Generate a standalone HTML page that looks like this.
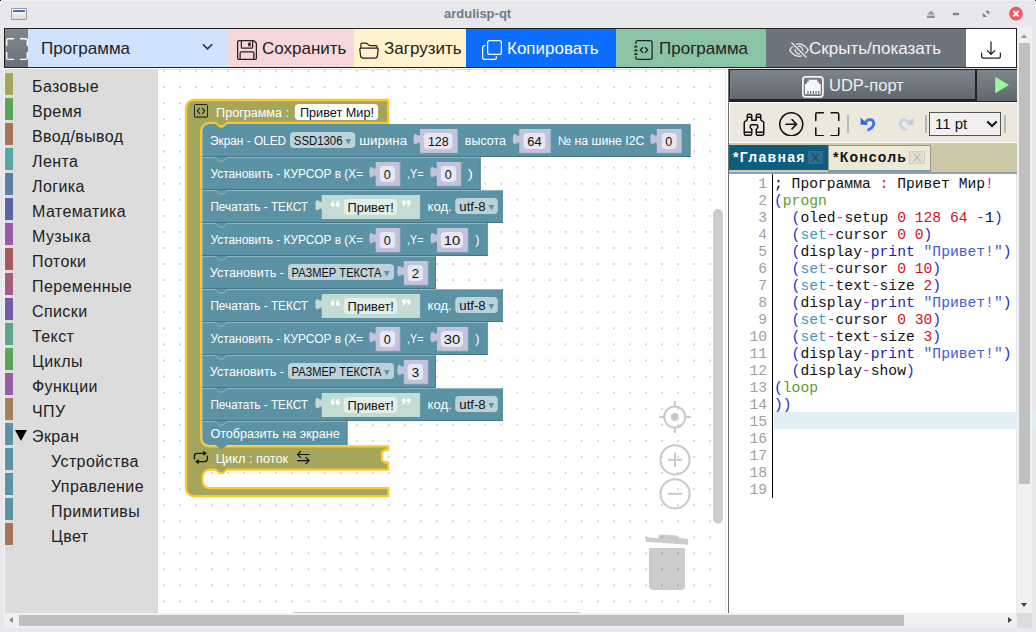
<!DOCTYPE html>
<html><head><meta charset="utf-8">
<style>
*{margin:0;padding:0;box-sizing:border-box}
html,body{width:1036px;height:632px;overflow:hidden;background:#e8e8ec;font-family:"Liberation Sans",sans-serif;position:relative}
.a{position:absolute}
#title{left:0;top:0;width:1036px;height:28px;background:#e8e8ec}
#title .t{left:444px;top:6px;font-size:13px;font-weight:bold;color:#6f7888}
#wicon{left:11px;top:8px;width:16px;height:12px;border:1px solid #9a9a9a;border-radius:1px;background:linear-gradient(#fff,#dcdcd4)}
#wicon:before{content:"";position:absolute;left:1px;right:1px;top:1px;height:2px;background:#4a6fb0}
#tb{left:4px;top:28px;width:1013px;height:40px;border:1px solid #222;border-width:1px 1px 1px 1px;background:#fff}
.btn{top:0;height:38px;font-size:17px;color:#222}
.btn span{position:absolute;top:10px;white-space:nowrap}
#sb{left:4px;top:69px;width:154px;height:544px;background:#dcdcdc;border-left:1px solid #f4f4f4}
.cat{position:absolute;left:28px;font-size:16px;color:#222;white-space:nowrap;letter-spacing:0.4px}
.stripe{position:absolute;left:0px;width:8px;height:22px}
#ws{left:158px;top:69px;width:570px;height:544px;background-color:#fff}
#rp{left:728px;top:69px;width:288px;height:545px;background:#fff}
.ln{position:absolute;left:0;width:39px;text-align:right;font-family:"Liberation Mono",monospace;font-size:14.67px;line-height:17px;color:#a0a0a0}
.cl{position:absolute;left:46px;font-family:"Liberation Mono",monospace;font-size:14.67px;line-height:17px;white-space:pre}
#vs{left:1017px;top:27px;width:15px;height:586px;background:#f0f0f0}
#hs{left:4px;top:613px;width:1028px;height:15px;background:#f0f0f0}
</style></head><body>
<div id="title" class="a"><div id="wicon" class="a"></div>
<svg class="a" style="left:920px;top:0" width="116" height="28" viewBox="920 0 116 28">
<path d="M931,10.7 L935,14.6 L927,14.6 Z" fill="#8a93a3"/><rect x="927" y="15.6" width="8" height="2.4" fill="#8a93a3"/>
<rect x="952.8" y="12.8" width="6.1" height="2.4" fill="#7a8290"/>
<path d="M985,10.8 L989.2,10.8 L989.2,15 Z M982.8,12.8 L982.8,17.1 L987,17.1 Z" fill="#7d8595"/>
<circle cx="1016" cy="13.7" r="6.9" fill="#ef5b62"/>
<path d="M1013.3,11 L1018.7,16.4 M1018.7,11 L1013.3,16.4" stroke="#fff" stroke-width="1.8"/>
</svg><div class="t a">ardulisp-qt</div></div>
<div id="tb" class="a">
  <div class="btn a" style="left:0;width:23px;background:linear-gradient(#80878f,#6a7179);overflow:hidden">
    <svg class="a" style="left:1px;top:9px" width="22" height="22" viewBox="0 0 16 16" fill="#fff"><path d="M1.5 1a.5.5 0 0 0-.5.5v4a.5.5 0 0 1-1 0v-4A1.5 1.5 0 0 1 1.5 0h4a.5.5 0 0 1 0 1zM10 .5a.5.5 0 0 1 .5-.5h4A1.5 1.5 0 0 1 16 1.5v4a.5.5 0 0 1-1 0v-4a.5.5 0 0 0-.5-.5h-4a.5.5 0 0 1-.5-.5M.5 10a.5.5 0 0 1 .5.5v4a.5.5 0 0 0 .5.5h4a.5.5 0 0 1 0 1h-4A1.5 1.5 0 0 1 0 14.5v-4a.5.5 0 0 1 .5-.5m15 0a.5.5 0 0 1 .5.5v4a1.5 1.5 0 0 1-1.5 1.5h-4a.5.5 0 0 1 0-1h4a.5.5 0 0 0 .5-.5v-4a.5.5 0 0 1 .5-.5"/></svg>
  </div>
  <div class="btn a" style="left:23px;width:200px;background:#cfe2ff"><span style="left:13px">Программа</span>
    <svg class="a" style="left:174px;top:12px" width="11" height="11" viewBox="0 0 11 11"><path d="M0.8 3.2 L5.5 7.8 L10.2 3.2" fill="none" stroke="#333" stroke-width="1.6"/></svg>
  </div>
  <div class="btn a" style="left:223px;width:126px;background:#f8d7da">
    <svg class="a" style="left:9px;top:11px" width="20" height="20" viewBox="0 0 16 16" fill="#222"><path d="M11 2H9v3h2z"/><path d="M1.5 0h11.586a1.5 1.5 0 0 1 1.06.44l1.415 1.414A1.5 1.5 0 0 1 16 2.914V14.5a1.5 1.5 0 0 1-1.5 1.5h-13A1.5 1.5 0 0 1 0 14.5v-13A1.5 1.5 0 0 1 1.5 0M1 1.5v13a.5.5 0 0 0 .5.5H2v-4.5A1.5 1.5 0 0 1 3.5 9h9a1.5 1.5 0 0 1 1.5 1.5V15h.5a.5.5 0 0 0 .5-.5V2.914a.5.5 0 0 0-.146-.353l-1.415-1.415A.5.5 0 0 0 13.086 1H13v4.5A1.5 1.5 0 0 1 11.5 7h-7A1.5 1.5 0 0 1 3 5.5V1H1.5a.5.5 0 0 0-.5.5m3 4a.5.5 0 0 0 .5.5h7a.5.5 0 0 0 .5-.5V1H4zM3 15h10v-4.5a.5.5 0 0 0-.5-.5h-9a.5.5 0 0 0-.5.5z"/></svg>
    <span style="left:34px">Сохранить</span></div>
  <div class="btn a" style="left:349px;width:112px;background:#fff3cd">
    <svg class="a" style="left:5px;top:11px" width="20" height="20" viewBox="0 0 16 16" fill="#222"><path d="M1 3.5A1.5 1.5 0 0 1 2.5 2h2.764c.958 0 1.76.56 2.311 1.184C7.985 3.648 8.48 4 9 4h4.5A1.5 1.5 0 0 1 15 5.5v.64c.57.265.94.876.856 1.546l-.64 5.124A2.5 2.5 0 0 1 12.733 15H3.266a2.5 2.5 0 0 1-2.481-2.19l-.64-5.124A1.5 1.5 0 0 1 1 6.14zM2 6h12v-.5a.5.5 0 0 0-.5-.5H9c-.964 0-1.71-.629-2.174-1.154C6.374 3.334 5.82 3 5.264 3H2.5a.5.5 0 0 0-.5.5zm-.367 1a.5.5 0 0 0-.496.562l.64 5.124A1.5 1.5 0 0 0 3.266 14h9.468a1.5 1.5 0 0 0 1.489-1.314l.64-5.124A.5.5 0 0 0 14.367 7z"/></svg>
    <span style="left:30px">Загрузить</span></div>
  <div class="btn a" style="left:461px;width:150px;background:#0d6efd;color:#fff">
    <svg class="a" style="left:16px;top:11px" width="20" height="20" viewBox="0 0 16 16" fill="#fff"><path fill-rule="evenodd" d="M4 2a2 2 0 0 1 2-2h8a2 2 0 0 1 2 2v8a2 2 0 0 1-2 2H6a2 2 0 0 1-2-2zm2-1a1 1 0 0 0-1 1v8a1 1 0 0 0 1 1h8a1 1 0 0 0 1-1V2a1 1 0 0 0-1-1zM2 5a1 1 0 0 0-1 1v8a1 1 0 0 0 1 1h8a1 1 0 0 0 1-1v-1h1v1a2 2 0 0 1-2 2H2a2 2 0 0 1-2-2V6a2 2 0 0 1 2-2h1v1z"/></svg>
    <span style="left:41px">Копировать</span></div>
  <div class="btn a" style="left:611px;width:150px;background:#8bc4a5">
    <svg class="a" style="left:18px;top:11px" width="20" height="20" viewBox="0 0 16 16" fill="#222"><path fill-rule="evenodd" d="M8.646 5.646a.5.5 0 0 1 .708 0l2 2a.5.5 0 0 1 0 .708l-2 2a.5.5 0 0 1-.708-.708L10.293 8 8.646 6.354a.5.5 0 0 1 0-.708m-1.292 0a.5.5 0 0 0-.708 0l-2 2a.5.5 0 0 0 0 .708l2 2a.5.5 0 0 0 .708-.708L5.707 8l1.647-1.646a.5.5 0 0 0 0-.708"/><path d="M3 0h10a2 2 0 0 1 2 2v12a2 2 0 0 1-2 2H3a2 2 0 0 1-2-2v-1h1v1a1 1 0 0 0 1 1h10a1 1 0 0 0 1-1V2a1 1 0 0 0-1-1H3a1 1 0 0 0-1 1v1H1V2a2 2 0 0 1 2-2"/><path d="M1 5v-.5a.5.5 0 0 1 1 0V5h.5a.5.5 0 0 1 0 1h-2a.5.5 0 0 1 0-1zm0 3v-.5a.5.5 0 0 1 1 0V8h.5a.5.5 0 0 1 0 1h-2a.5.5 0 0 1 0-1zm0 3v-.5a.5.5 0 0 1 1 0v.5h.5a.5.5 0 0 1 0 1h-2a.5.5 0 0 1 0-1z"/></svg>
    <span style="left:43px">Программа</span></div>
  <div class="btn a" style="left:761px;width:200px;background:#6c757d;color:#f4f4f4">
    <svg class="a" style="left:23px;top:11px" width="20" height="20" viewBox="0 0 16 16" fill="#eee"><path d="M13.359 11.238C15.06 9.72 16 8 16 8s-3-5.5-8-5.5a7 7 0 0 0-2.79.588l.77.771A6 6 0 0 1 8 3.5c2.12 0 3.879 1.168 5.168 2.457A13 13 0 0 1 14.828 8q-.086.13-.195.288c-.335.48-.83 1.12-1.465 1.755q-.247.248-.517.486z"/><path d="M11.297 9.176a3.5 3.5 0 0 0-4.474-4.474l.823.823a2.5 2.5 0 0 1 2.829 2.829zm-2.943 1.299.822.822a3.5 3.5 0 0 1-4.474-4.474l.823.823a2.5 2.5 0 0 0 2.829 2.829"/><path d="M3.35 5.47q-.27.24-.518.487A13 13 0 0 0 1.172 8l.195.288c.335.48.83 1.12 1.465 1.755C4.121 11.332 5.881 12.5 8 12.5c.716 0 1.39-.133 2.02-.36l.77.772A7 7 0 0 1 8 13.5C3 13.5 0 8 0 8s.939-1.721 2.641-3.238l.708.709zm10.296 8.884-12-12 .708-.708 12 12z"/></svg>
    <span style="left:43px">Скрыть/показать</span></div>
  <div class="btn a" style="left:961px;width:50px;background:#fff">
    <svg class="a" style="left:15px;top:11px" width="20" height="20" viewBox="0 0 16 16" fill="#222"><path d="M.5 9.9a.5.5 0 0 1 .5.5v2.5a1 1 0 0 0 1 1h12a1 1 0 0 0 1-1v-2.5a.5.5 0 0 1 1 0v2.5a2 2 0 0 1-2 2H2a2 2 0 0 1-2-2v-2.5a.5.5 0 0 1 .5-.5"/><path d="M7.646 11.854a.5.5 0 0 0 .708 0l3-3a.5.5 0 0 0-.708-.708L8.5 10.293V1.5a.5.5 0 0 0-1 0v8.793L5.354 8.146a.5.5 0 1 0-.708.708z"/></svg>
  </div>
</div>
<div id="sb" class="a"><div class="stripe" style="top:4px;background:#a5a55b"></div><div class="cat" style="top:9px;left:27px">Базовые</div><div class="stripe" style="top:29px;background:#5ba55b"></div><div class="cat" style="top:34px;left:27px">Время</div><div class="stripe" style="top:54px;background:#a5745b"></div><div class="cat" style="top:59px;left:27px">Ввод/вывод</div><div class="stripe" style="top:79px;background:#5ba5a5"></div><div class="cat" style="top:84px;left:27px">Лента</div><div class="stripe" style="top:104px;background:#5b80a5"></div><div class="cat" style="top:109px;left:27px">Логика</div><div class="stripe" style="top:129px;background:#5b67a5"></div><div class="cat" style="top:134px;left:27px">Математика</div><div class="stripe" style="top:154px;background:#995ba5"></div><div class="cat" style="top:159px;left:27px">Музыка</div><div class="stripe" style="top:179px;background:#a55b5b"></div><div class="cat" style="top:184px;left:27px">Потоки</div><div class="stripe" style="top:204px;background:#a55b80"></div><div class="cat" style="top:209px;left:27px">Переменные</div><div class="stripe" style="top:229px;background:#745ba5"></div><div class="cat" style="top:234px;left:27px">Списки</div><div class="stripe" style="top:254px;background:#5ba58c"></div><div class="cat" style="top:259px;left:27px">Текст</div><div class="stripe" style="top:279px;background:#5ba55b"></div><div class="cat" style="top:284px;left:27px">Циклы</div><div class="stripe" style="top:304px;background:#995ba5"></div><div class="cat" style="top:309px;left:27px">Функции</div><div class="stripe" style="top:329px;background:#a5805b"></div><div class="cat" style="top:334px;left:27px">ЧПУ</div><div class="stripe" style="top:354px;background:#5b93a5"></div><div class="cat" style="top:359px;left:27px">Экран</div><div class="a" style="left:9.7px;top:361px;width:0;height:0;border-left:6.5px solid transparent;border-right:6.5px solid transparent;border-top:11px solid #000"></div><div class="stripe" style="top:379px;background:#5b93a5"></div><div class="cat" style="top:384px;left:46px">Устройства</div><div class="stripe" style="top:404px;background:#5b93a5"></div><div class="cat" style="top:409px;left:46px">Управление</div><div class="stripe" style="top:429px;background:#5b93a5"></div><div class="cat" style="top:434px;left:46px">Примитивы</div><div class="stripe" style="top:454px;background:#a5745b"></div><div class="cat" style="top:459px;left:46px">Цвет</div></div>
<div class="a" style="left:4px;top:68px;width:724px;height:1px;background:#fff"></div><div id="ws" class="a" style="overflow:hidden"><svg class="a" style="left:0;top:0" width="570" height="544" font-family="Liberation Sans"><g transform="translate(-158,-69)"><defs><pattern id="dots" x="163.8" y="71.2" width="16.07" height="16.07" patternUnits="userSpaceOnUse"><rect x="-0.8" y="-0.8" width="1.6" height="1.6" fill="#c4c4c4"/><rect x="15.27" y="-0.8" width="1.6" height="1.6" fill="#c4c4c4"/><rect x="-0.8" y="15.27" width="1.6" height="1.6" fill="#c4c4c4"/><rect x="15.27" y="15.27" width="1.6" height="1.6" fill="#c4c4c4"/></pattern></defs>
<rect x="158" y="69" width="568" height="544" fill="url(#dots)"/><path d="M186,108 A8,8 0 0 1 194,100 L388.2,100 L388.2,123 L227,123 L223,126.5 L219.5,126.5 L215.5,123 L209,123 A8,8 0 0 0 201.2,131 L201.2,438.3 A8,8 0 0 0 209.2,446.3 L388.2,446.3 L388.2,450 L385,450 L382,452 L382,460.5 L385,462.5 L388.2,462.5 L388.2,469.7 L227,469.7 L223,473.2 L219.5,473.2 L215.5,469.7 L209.5,469.7 A7,7 0 0 0 202.5,476.7 L202.5,481.2 A7,7 0 0 0 209.5,488.2 L388.2,488.2 L388.2,496.1 L194,496.1 A8,8 0 0 1 186,488.1 Z" fill="#a5a55b" stroke="#fcc72f" stroke-width="2.3"/>
<path d="M227,471 L223,474.5 L219.5,474.5 L215.5,471 L209.5,471 A6,6 0 0 0 203.7,477 L203.7,481 A6,6 0 0 0 209.5,487 L388.7,487 L388.7,471 Z" fill="#fff"/>
<path d="M227,471 L223,474.5 L219.5,474.5 L215.5,471 L209.5,471 A6,6 0 0 0 203.7,477 L203.7,481 A6,6 0 0 0 209.5,487 L388.7,487 L388.7,471 Z" fill="url(#dots)"/>
<path d="M202.3,131 A7,7 0 0 1 209.3,124 L215.5,124 L219.5,127.5 L223,127.5 L227,124 L690.5,124 L690.5,157 L202.3,157 Z" fill="#5b92a4"/>
<path d="M202.3,157 L480.7,157 L480.7,190 L202.3,190 Z" fill="#5b92a4"/>
<path d="M202.3,190 L502.8,190 L502.8,223 L202.3,223 Z" fill="#5b92a4"/>
<path d="M202.3,223 L487.7,223 L487.7,256 L202.3,256 Z" fill="#5b92a4"/>
<path d="M202.3,256 L436,256 L436,289 L202.3,289 Z" fill="#5b92a4"/>
<path d="M202.3,289 L502.8,289 L502.8,322 L202.3,322 Z" fill="#5b92a4"/>
<path d="M202.3,322 L487.7,322 L487.7,355 L202.3,355 Z" fill="#5b92a4"/>
<path d="M202.3,355 L436,355 L436,388 L202.3,388 Z" fill="#5b92a4"/>
<path d="M202.3,388 L502.8,388 L502.8,421 L202.3,421 Z" fill="#5b92a4"/>
<path d="M202.3,421 L347.5,421 L347.5,445 L227,445 L223,448.5 L219.5,448.5 L215.5,445 L209.3,445 A7,7 0 0 1 202.3,438 Z" fill="#5b92a4"/>
<rect x="202.3" y="156" width="488.2" height="1" fill="#467585"/>
<path d="M202.3,157.5 L215.5,157.5 L219.5,161 L223,161 L227,157.5 L480.2,157.5" fill="none" stroke="#8db5c2" stroke-width="1"/>
<rect x="202.3" y="189" width="278.4" height="1" fill="#467585"/>
<path d="M202.3,190.5 L215.5,190.5 L219.5,194 L223,194 L227,190.5 L502.3,190.5" fill="none" stroke="#8db5c2" stroke-width="1"/>
<rect x="202.3" y="222" width="300.5" height="1" fill="#467585"/>
<path d="M202.3,223.5 L215.5,223.5 L219.5,227 L223,227 L227,223.5 L487.2,223.5" fill="none" stroke="#8db5c2" stroke-width="1"/>
<rect x="202.3" y="255" width="285.4" height="1" fill="#467585"/>
<path d="M202.3,256.5 L215.5,256.5 L219.5,260 L223,260 L227,256.5 L435.5,256.5" fill="none" stroke="#8db5c2" stroke-width="1"/>
<rect x="202.3" y="288" width="233.7" height="1" fill="#467585"/>
<path d="M202.3,289.5 L215.5,289.5 L219.5,293 L223,293 L227,289.5 L502.3,289.5" fill="none" stroke="#8db5c2" stroke-width="1"/>
<rect x="202.3" y="321" width="300.5" height="1" fill="#467585"/>
<path d="M202.3,322.5 L215.5,322.5 L219.5,326 L223,326 L227,322.5 L487.2,322.5" fill="none" stroke="#8db5c2" stroke-width="1"/>
<rect x="202.3" y="354" width="285.4" height="1" fill="#467585"/>
<path d="M202.3,355.5 L215.5,355.5 L219.5,359 L223,359 L227,355.5 L435.5,355.5" fill="none" stroke="#8db5c2" stroke-width="1"/>
<rect x="202.3" y="387" width="233.7" height="1" fill="#467585"/>
<path d="M202.3,388.5 L215.5,388.5 L219.5,392 L223,392 L227,388.5 L502.3,388.5" fill="none" stroke="#8db5c2" stroke-width="1"/>
<rect x="202.3" y="420" width="300.5" height="1" fill="#467585"/>
<path d="M202.3,421.5 L215.5,421.5 L219.5,425 L223,425 L227,421.5 L347.0,421.5" fill="none" stroke="#8db5c2" stroke-width="1"/>
<rect x="689.5" y="124" width="1" height="33" fill="#467585" opacity="0.6"/>
<rect x="479.7" y="157" width="1" height="33" fill="#467585" opacity="0.6"/>
<rect x="501.8" y="190" width="1" height="33" fill="#467585" opacity="0.6"/>
<rect x="486.7" y="223" width="1" height="33" fill="#467585" opacity="0.6"/>
<rect x="435" y="256" width="1" height="33" fill="#467585" opacity="0.6"/>
<rect x="501.8" y="289" width="1" height="33" fill="#467585" opacity="0.6"/>
<rect x="486.7" y="322" width="1" height="33" fill="#467585" opacity="0.6"/>
<rect x="435" y="355" width="1" height="33" fill="#467585" opacity="0.6"/>
<rect x="501.8" y="388" width="1" height="33" fill="#467585" opacity="0.6"/>
<rect x="346.5" y="421" width="1" height="24" fill="#467585" opacity="0.6"/>
<text x="210.0" y="145" textLength="76.1" lengthAdjust="spacingAndGlyphs" fill="#fff" font-size="12.3">Экран - OLED</text>
<rect x="290" y="132" width="65.30000000000001" height="16" rx="4" fill="#bcd2da"/>
<text x="293.8" y="144.5" textLength="48.70000000000001" lengthAdjust="spacingAndGlyphs" fill="#111" font-size="12.3">SSD1306</text>
<path d="M345.5,139 L351.3,139 L348.40000000000003,144.6 Z" fill="#5b92a4"/>
<text x="359.3" y="145" textLength="47.799999999999976" lengthAdjust="spacingAndGlyphs" fill="#fff" font-size="12.3">ширина</text>
<path d="M420,129 L457.6,129 L457.6,153 L420,153 L420,145 c0,-7.8 -6.4,6.24 -6.4,-5.85 s6.4,1.95 6.4,-5.85 Z" fill="#c3c4dc"/>
<path d="M420,153 L457.6,153 L457.6,129" fill="none" stroke="#a9aac6" stroke-width="0.8"/>
<rect x="423.8" y="133" width="28.599999999999966" height="16" rx="4" fill="#e6e7f1"/>
<text x="427.90000000000003" y="145.8" textLength="20.799999999999976" lengthAdjust="spacingAndGlyphs" fill="#111" font-size="12.3">128</text>
<text x="464.8" y="145" textLength="41.20000000000001" lengthAdjust="spacingAndGlyphs" fill="#fff" font-size="12.3">высота</text>
<path d="M519.3,129 L550.6,129 L550.6,153 L519.3,153 L519.3,145 c0,-7.8 -6.4,6.24 -6.4,-5.85 s6.4,1.95 6.4,-5.85 Z" fill="#c3c4dc"/>
<path d="M519.3,153 L550.6,153 L550.6,129" fill="none" stroke="#a9aac6" stroke-width="0.8"/>
<rect x="523.5" y="133" width="21.899999999999977" height="16" rx="4" fill="#e6e7f1"/>
<text x="527.3" y="145.8" textLength="14.4" lengthAdjust="spacingAndGlyphs" fill="#111" font-size="12.3">64</text>
<text x="557.8" y="145" textLength="86.69999999999996" lengthAdjust="spacingAndGlyphs" fill="#fff" font-size="12.3">№ на шине I2C</text>
<path d="M656.8,129 L681.5,129 L681.5,153 L656.8,153 L656.8,145 c0,-7.8 -6.4,6.24 -6.4,-5.85 s6.4,1.95 6.4,-5.85 Z" fill="#c3c4dc"/>
<path d="M656.8,153 L681.5,153 L681.5,129" fill="none" stroke="#a9aac6" stroke-width="0.8"/>
<rect x="661.8" y="133" width="14.800000000000068" height="16" rx="4" fill="#e6e7f1"/>
<text x="665.3" y="145.8" textLength="7.000000000000023" lengthAdjust="spacingAndGlyphs" fill="#111" font-size="12.3">0</text>
<text x="210.5" y="178" textLength="152.6" lengthAdjust="spacingAndGlyphs" fill="#fff" font-size="12.3">Установить - КУРСОР в (X=</text>
<path d="M375.7,162 L400,162 L400,186 L375.7,186 L375.7,178 c0,-7.8 -6.4,6.24 -6.4,-5.85 s6.4,1.95 6.4,-5.85 Z" fill="#c3c4dc"/>
<path d="M375.7,186 L400,186 L400,162" fill="none" stroke="#a9aac6" stroke-width="0.8"/>
<rect x="379.8" y="166" width="15.199999999999989" height="16" rx="4" fill="#e6e7f1"/>
<text x="383.8" y="178.8" textLength="7.000000000000023" lengthAdjust="spacingAndGlyphs" fill="#111" font-size="12.3">0</text>
<text x="407.0" y="178" textLength="16.4" lengthAdjust="spacingAndGlyphs" fill="#fff" font-size="12.3">,Y=</text>
<path d="M436.8,162 L461,162 L461,186 L436.8,186 L436.8,178 c0,-7.8 -6.4,6.24 -6.4,-5.85 s6.4,1.95 6.4,-5.85 Z" fill="#c3c4dc"/>
<path d="M436.8,186 L461,186 L461,162" fill="none" stroke="#a9aac6" stroke-width="0.8"/>
<rect x="441" y="166" width="15" height="16" rx="4" fill="#e6e7f1"/>
<text x="444.8" y="178.8" textLength="7.000000000000023" lengthAdjust="spacingAndGlyphs" fill="#111" font-size="12.3">0</text>
<text x="467.8" y="178" textLength="5.200000000000012" lengthAdjust="spacingAndGlyphs" fill="#fff" font-size="12.3">)</text>
<text x="210.4" y="211" textLength="97.60000000000002" lengthAdjust="spacingAndGlyphs" fill="#fff" font-size="12.3">Печатать - ТЕКСТ</text>
<path d="M321.8,195 L420.1,195 L420.1,219 L321.8,219 L321.8,211 c0,-7.8 -6.4,6.24 -6.4,-5.85 s6.4,1.95 6.4,-5.85 Z" fill="#c3dcd3"/>
<rect x="343.8" y="199" width="53.3" height="16" rx="4" fill="#e3eeea"/>
<text x="347.5" y="211.8" textLength="46.4" lengthAdjust="spacingAndGlyphs" fill="#111" font-size="12.3">Привет!</text>
<path d="M330.8,204.70000000000002 C330.8,202.4 332.0,200.9 334.3,200.4 L334.5,201.3 C333.5,201.8 332.8,202.4 332.70000000000005,202.8 A2.05,2.05 0 1 1 330.8,204.70000000000002 Z" fill="#fff"/>
<path d="M335.8,204.70000000000002 C335.8,202.4 337.0,200.9 339.3,200.4 L339.5,201.3 C338.5,201.8 337.8,202.4 337.70000000000005,202.8 A2.05,2.05 0 1 1 335.8,204.70000000000002 Z" fill="#fff"/>
<path d="M402.3,204.70000000000002 C402.3,202.4 403.5,200.9 405.8,200.4 L406.0,201.3 C405.0,201.8 404.3,202.4 404.20000000000005,202.8 A2.05,2.05 0 1 1 402.3,204.70000000000002 Z" fill="#fff" transform="rotate(180 404.1 203.6)"/>
<path d="M407.09999999999997,204.70000000000002 C407.09999999999997,202.4 408.29999999999995,200.9 410.59999999999997,200.4 L410.79999999999995,201.3 C409.79999999999995,201.8 409.09999999999997,202.4 409.0,202.8 A2.05,2.05 0 1 1 407.09999999999997,204.70000000000002 Z" fill="#fff" transform="rotate(180 408.9 203.6)"/>
<text x="427.5" y="211" textLength="24.20000000000001" lengthAdjust="spacingAndGlyphs" fill="#fff" font-size="12.3">код.</text>
<rect x="455.2" y="198" width="42.60000000000002" height="16" rx="4" fill="#bcd2da"/>
<text x="459.3" y="210.5" textLength="26.4" lengthAdjust="spacingAndGlyphs" fill="#111" font-size="12.3">utf-8</text>
<path d="M488.5,205 L494.3,205 L491.40000000000003,210.6 Z" fill="#5b92a4"/>
<text x="210.5" y="244" textLength="152.6" lengthAdjust="spacingAndGlyphs" fill="#fff" font-size="12.3">Установить - КУРСОР в (X=</text>
<path d="M375.7,228 L400,228 L400,252 L375.7,252 L375.7,244 c0,-7.8 -6.4,6.24 -6.4,-5.85 s6.4,1.95 6.4,-5.85 Z" fill="#c3c4dc"/>
<path d="M375.7,252 L400,252 L400,228" fill="none" stroke="#a9aac6" stroke-width="0.8"/>
<rect x="379.8" y="232" width="15.199999999999989" height="16" rx="4" fill="#e6e7f1"/>
<text x="383.8" y="244.8" textLength="7.000000000000023" lengthAdjust="spacingAndGlyphs" fill="#111" font-size="12.3">0</text>
<text x="407.0" y="244" textLength="16.4" lengthAdjust="spacingAndGlyphs" fill="#fff" font-size="12.3">,Y=</text>
<path d="M437,228 L468,228 L468,252 L437,252 L437,244 c0,-7.8 -6.4,6.24 -6.4,-5.85 s6.4,1.95 6.4,-5.85 Z" fill="#c3c4dc"/>
<path d="M437,252 L468,252 L468,228" fill="none" stroke="#a9aac6" stroke-width="0.8"/>
<rect x="440.8" y="232" width="22.19999999999999" height="16" rx="4" fill="#e6e7f1"/>
<text x="443.8" y="244.8" textLength="16.4" lengthAdjust="spacingAndGlyphs" fill="#111" font-size="12.3">10</text>
<text x="475.2" y="244" textLength="4.200000000000012" lengthAdjust="spacingAndGlyphs" fill="#fff" font-size="12.3">)</text>
<text x="209.70000000000002" y="277" textLength="74.39999999999998" lengthAdjust="spacingAndGlyphs" fill="#fff" font-size="12.3">Установить -</text>
<rect x="288" y="264" width="106.10000000000002" height="16" rx="4" fill="#bcd2da"/>
<text x="291.5" y="276.5" textLength="89.9" lengthAdjust="spacingAndGlyphs" fill="#111" font-size="12.3">РАЗМЕР ТЕКСТА</text>
<path d="M383.9,271 L389.7,271 L386.8,276.6 Z" fill="#5b92a4"/>
<path d="M403.8,261 L428,261 L428,285 L403.8,285 L403.8,277 c0,-7.8 -6.4,6.24 -6.4,-5.85 s6.4,1.95 6.4,-5.85 Z" fill="#c3c4dc"/>
<path d="M403.8,285 L428,285 L428,261" fill="none" stroke="#a9aac6" stroke-width="0.8"/>
<rect x="407.6" y="265" width="15.399999999999977" height="16" rx="4" fill="#e6e7f1"/>
<text x="411.8" y="277.8" textLength="7.4" lengthAdjust="spacingAndGlyphs" fill="#111" font-size="12.3">2</text>
<text x="210.4" y="310" textLength="97.60000000000002" lengthAdjust="spacingAndGlyphs" fill="#fff" font-size="12.3">Печатать - ТЕКСТ</text>
<path d="M321.8,294 L420.1,294 L420.1,318 L321.8,318 L321.8,310 c0,-7.8 -6.4,6.24 -6.4,-5.85 s6.4,1.95 6.4,-5.85 Z" fill="#c3dcd3"/>
<rect x="343.8" y="298" width="53.3" height="16" rx="4" fill="#e3eeea"/>
<text x="347.5" y="310.8" textLength="46.4" lengthAdjust="spacingAndGlyphs" fill="#111" font-size="12.3">Привет!</text>
<path d="M330.8,303.7 C330.8,301.4 332.0,299.9 334.3,299.4 L334.5,300.29999999999995 C333.5,300.79999999999995 332.8,301.4 332.70000000000005,301.79999999999995 A2.05,2.05 0 1 1 330.8,303.7 Z" fill="#fff"/>
<path d="M335.8,303.7 C335.8,301.4 337.0,299.9 339.3,299.4 L339.5,300.29999999999995 C338.5,300.79999999999995 337.8,301.4 337.70000000000005,301.79999999999995 A2.05,2.05 0 1 1 335.8,303.7 Z" fill="#fff"/>
<path d="M402.3,303.7 C402.3,301.4 403.5,299.9 405.8,299.4 L406.0,300.29999999999995 C405.0,300.79999999999995 404.3,301.4 404.20000000000005,301.79999999999995 A2.05,2.05 0 1 1 402.3,303.7 Z" fill="#fff" transform="rotate(180 404.1 302.59999999999997)"/>
<path d="M407.09999999999997,303.7 C407.09999999999997,301.4 408.29999999999995,299.9 410.59999999999997,299.4 L410.79999999999995,300.29999999999995 C409.79999999999995,300.79999999999995 409.09999999999997,301.4 409.0,301.79999999999995 A2.05,2.05 0 1 1 407.09999999999997,303.7 Z" fill="#fff" transform="rotate(180 408.9 302.59999999999997)"/>
<text x="427.5" y="310" textLength="24.20000000000001" lengthAdjust="spacingAndGlyphs" fill="#fff" font-size="12.3">код.</text>
<rect x="455.2" y="297" width="42.60000000000002" height="16" rx="4" fill="#bcd2da"/>
<text x="459.3" y="309.5" textLength="26.4" lengthAdjust="spacingAndGlyphs" fill="#111" font-size="12.3">utf-8</text>
<path d="M488.5,304 L494.3,304 L491.40000000000003,309.6 Z" fill="#5b92a4"/>
<text x="210.5" y="343" textLength="152.6" lengthAdjust="spacingAndGlyphs" fill="#fff" font-size="12.3">Установить - КУРСОР в (X=</text>
<path d="M375.7,327 L400,327 L400,351 L375.7,351 L375.7,343 c0,-7.8 -6.4,6.24 -6.4,-5.85 s6.4,1.95 6.4,-5.85 Z" fill="#c3c4dc"/>
<path d="M375.7,351 L400,351 L400,327" fill="none" stroke="#a9aac6" stroke-width="0.8"/>
<rect x="379.8" y="331" width="15.199999999999989" height="16" rx="4" fill="#e6e7f1"/>
<text x="383.8" y="343.8" textLength="7.000000000000023" lengthAdjust="spacingAndGlyphs" fill="#111" font-size="12.3">0</text>
<text x="407.0" y="343" textLength="16.4" lengthAdjust="spacingAndGlyphs" fill="#fff" font-size="12.3">,Y=</text>
<path d="M437,327 L468,327 L468,351 L437,351 L437,343 c0,-7.8 -6.4,6.24 -6.4,-5.85 s6.4,1.95 6.4,-5.85 Z" fill="#c3c4dc"/>
<path d="M437,351 L468,351 L468,327" fill="none" stroke="#a9aac6" stroke-width="0.8"/>
<rect x="440.8" y="331" width="22.19999999999999" height="16" rx="4" fill="#e6e7f1"/>
<text x="443.8" y="343.8" textLength="16.4" lengthAdjust="spacingAndGlyphs" fill="#111" font-size="12.3">30</text>
<text x="475.2" y="343" textLength="4.200000000000012" lengthAdjust="spacingAndGlyphs" fill="#fff" font-size="12.3">)</text>
<text x="209.70000000000002" y="376" textLength="74.39999999999998" lengthAdjust="spacingAndGlyphs" fill="#fff" font-size="12.3">Установить -</text>
<rect x="288" y="363" width="106.10000000000002" height="16" rx="4" fill="#bcd2da"/>
<text x="291.5" y="375.5" textLength="89.9" lengthAdjust="spacingAndGlyphs" fill="#111" font-size="12.3">РАЗМЕР ТЕКСТА</text>
<path d="M383.9,370 L389.7,370 L386.8,375.6 Z" fill="#5b92a4"/>
<path d="M403.8,360 L428,360 L428,384 L403.8,384 L403.8,376 c0,-7.8 -6.4,6.24 -6.4,-5.85 s6.4,1.95 6.4,-5.85 Z" fill="#c3c4dc"/>
<path d="M403.8,384 L428,384 L428,360" fill="none" stroke="#a9aac6" stroke-width="0.8"/>
<rect x="407.6" y="364" width="15.399999999999977" height="16" rx="4" fill="#e6e7f1"/>
<text x="411.8" y="376.8" textLength="7.4" lengthAdjust="spacingAndGlyphs" fill="#111" font-size="12.3">3</text>
<text x="210.4" y="409" textLength="97.60000000000002" lengthAdjust="spacingAndGlyphs" fill="#fff" font-size="12.3">Печатать - ТЕКСТ</text>
<path d="M321.8,393 L420.1,393 L420.1,417 L321.8,417 L321.8,409 c0,-7.8 -6.4,6.24 -6.4,-5.85 s6.4,1.95 6.4,-5.85 Z" fill="#c3dcd3"/>
<rect x="343.8" y="397" width="53.3" height="16" rx="4" fill="#e3eeea"/>
<text x="347.5" y="409.8" textLength="46.4" lengthAdjust="spacingAndGlyphs" fill="#111" font-size="12.3">Привет!</text>
<path d="M330.8,402.7 C330.8,400.4 332.0,398.9 334.3,398.4 L334.5,399.29999999999995 C333.5,399.79999999999995 332.8,400.4 332.70000000000005,400.79999999999995 A2.05,2.05 0 1 1 330.8,402.7 Z" fill="#fff"/>
<path d="M335.8,402.7 C335.8,400.4 337.0,398.9 339.3,398.4 L339.5,399.29999999999995 C338.5,399.79999999999995 337.8,400.4 337.70000000000005,400.79999999999995 A2.05,2.05 0 1 1 335.8,402.7 Z" fill="#fff"/>
<path d="M402.3,402.7 C402.3,400.4 403.5,398.9 405.8,398.4 L406.0,399.29999999999995 C405.0,399.79999999999995 404.3,400.4 404.20000000000005,400.79999999999995 A2.05,2.05 0 1 1 402.3,402.7 Z" fill="#fff" transform="rotate(180 404.1 401.59999999999997)"/>
<path d="M407.09999999999997,402.7 C407.09999999999997,400.4 408.29999999999995,398.9 410.59999999999997,398.4 L410.79999999999995,399.29999999999995 C409.79999999999995,399.79999999999995 409.09999999999997,400.4 409.0,400.79999999999995 A2.05,2.05 0 1 1 407.09999999999997,402.7 Z" fill="#fff" transform="rotate(180 408.9 401.59999999999997)"/>
<text x="427.5" y="409" textLength="24.20000000000001" lengthAdjust="spacingAndGlyphs" fill="#fff" font-size="12.3">код.</text>
<rect x="455.2" y="396" width="42.60000000000002" height="16" rx="4" fill="#bcd2da"/>
<text x="459.3" y="408.5" textLength="26.4" lengthAdjust="spacingAndGlyphs" fill="#111" font-size="12.3">utf-8</text>
<path d="M488.5,403 L494.3,403 L491.40000000000003,408.6 Z" fill="#5b92a4"/>
<text x="210.4" y="437.5" textLength="129.3" lengthAdjust="spacingAndGlyphs" fill="#fff" font-size="12.3">Отобразить на экране</text>
<rect x="294.8" y="104" width="83.3" height="16" rx="4" fill="#fff"/>
<text x="299.90000000000003" y="116.8" textLength="74.1" lengthAdjust="spacingAndGlyphs" fill="#111" font-size="12.3">Привет Мир!</text>
<text x="216.10000000000002" y="116.8" textLength="72.9" lengthAdjust="spacingAndGlyphs" fill="#fff" font-size="12.3">Программа :</text>
<rect x="194.5" y="104.5" width="13" height="13" rx="1" fill="none" stroke="#222" stroke-width="1"/>
<rect x="195" y="116" width="12" height="1.5" fill="#6b6b3a"/>
<path d="M199.8,108 L197.5,111 L199.8,114 M202.2,108 L204.5,111 L202.2,114" fill="none" stroke="#111" stroke-width="1.1"/>
<text x="215.70000000000002" y="462.7" textLength="72.39999999999998" lengthAdjust="spacingAndGlyphs" fill="#fff" font-size="12.3">Цикл : поток</text>
<path d="M194.4,459.5 L194.4,456 A2.8,2.8 0 0 1 197.2,453.3 L204.5,453.3 M207.4,455.8 L207.4,458.8 A2.8,2.8 0 0 1 204.6,461.6 L197.5,461.6" fill="none" stroke="#111" stroke-width="1.3"/>
<path d="M203.6,451.4 L206.4,453.3 L203.6,455.2 Z M198.4,459.7 L195.6,461.6 L198.4,463.5 Z" fill="#111" stroke="#111" stroke-width="0.8"/>
<path d="M309.6,454.5 L297.6,454.5 M300.9,451.2 L297.6,454.5 L300.9,457.9 M297.2,460.6 L309,460.6 M305.6,457.2 L309,460.6 L305.6,464.2" fill="none" stroke="#111" stroke-width="1.2"/>
<g fill="none" stroke="#c9c9c9" stroke-width="2">
<circle cx="674.8" cy="417" r="10.5"/><path d="M674.8,401 V406.5 M674.8,427.5 V433 M659.3,417 H664.3 M685.3,417 H690.6" />
<circle cx="675" cy="459.8" r="14.6"/><path d="M667.8,459.8 H682.2 M675,452.6 V467"/>
<circle cx="675" cy="493.8" r="14.6"/><path d="M667.8,493.8 H682.2"/>
</g>
<circle cx="674.8" cy="417" r="4" fill="#c9c9c9"/>
<g fill="#000" fill-opacity="0.2">
<path d="M645.6,537 L658,538.2 L659,534.4 L676.5,535.6 L677.4,537.6 L688.2,539 L688,544.8 L645.8,541.8 Z"/>
<path d="M649,548 H685 V586 A4,4 0 0 1 681,590 H653 A4,4 0 0 1 649,586 Z"/>
</g>
<rect x="713.1" y="209" width="9.8" height="314.7" rx="4.9" fill="#cccccc"/>
<rect x="293" y="612" width="287" height="1.2" fill="#cfcfcf"/>
<rect x="725" y="69" width="1" height="544" fill="#e6e6e6"/><rect x="158" y="69" width="567" height="1" fill="#e2e2e2"/>
<rect x="726" y="69" width="2" height="544" fill="#fff"/>
</g></svg></div>
<div id="rp" class="a">
<div class="a" style="left:0;top:0;width:1px;height:545px;background:#6e6e6e"></div>
<div class="a" style="left:1px;top:0;width:288px;height:33px;background:#222"></div>
<div class="a" id="udp" style="left:1px;top:1px;width:246px;height:29px;background:linear-gradient(#7d858d,#5f676f);border-left:1px solid #222;box-shadow:inset 1px 1px 0 #7e7e7e"></div>
<svg class="a" style="left:73px;top:6px" width="24" height="24" viewBox="801 75 24 24"><rect x="802.9" y="76.9" width="20" height="20" rx="3" fill="none" stroke="#f4f4f4" stroke-width="1.8"/><path d="M804.9,94.3 V84.1 H806.8 V81.7 H808.7 V79.8 H817.2 V81.7 H818.9 V84.1 H820.8 V94.3 Z" fill="#f6f6f6"/><path d="M808,91 V93.8 M810.7,91 V93.8 M813.4,91 V93.8 M816.1,91 V93.8 M818.8,91 V93.8" stroke="#6a7179" stroke-width="1.2"/></svg>
<div class="a" style="left:101px;top:7px;font-size:16.5px;color:#eef0f2;white-space:nowrap">UDP-порт</div>
<div class="a" style="left:249px;top:1px;width:40px;height:31px;background:linear-gradient(#7d858d,#5f676f)"></div>
<svg class="a" style="left:266px;top:7px" width="16" height="18" viewBox="0 0 16 18"><path d="M1.2,0.8 L15,9 L1.2,17.2 Z" fill="#9ef59e"/></svg>
<div class="a" style="left:1px;top:33px;width:288px;height:40px;background:#ece9dc;border-top:1px solid #fff;border-left:1px solid #fff"></div>
<div class="a" style="left:1px;top:73px;width:288px;height:1px;background:#fff"></div>
<svg class="a" style="left:14px;top:42.5px" width="24" height="24" viewBox="0 0 16 16" fill="#111"><path d="M3 2.5A1.5 1.5 0 0 1 4.5 1h1A1.5 1.5 0 0 1 7 2.5V5h2V2.5A1.5 1.5 0 0 1 10.5 1h1A1.5 1.5 0 0 1 13 2.5v2.382a.5.5 0 0 0 .276.447l.895.447A1.5 1.5 0 0 1 15 7.118V14.5a1.5 1.5 0 0 1-1.5 1.5h-3A1.5 1.5 0 0 1 9 14.5v-3a.5.5 0 0 1 .146-.354l.854-.853V9.5a.5.5 0 0 0-.5-.5h-3a.5.5 0 0 0-.5.5v.793l.854.853A.5.5 0 0 1 7 11.5v3A1.5 1.5 0 0 1 5.5 16h-3A1.5 1.5 0 0 1 1 14.5V7.118a1.5 1.5 0 0 1 .83-1.342l.894-.447A.5.5 0 0 0 3 4.882zM4.5 2a.5.5 0 0 0-.5.5V3h2v-.5a.5.5 0 0 0-.5-.5zM6 4H4v.882a1.5 1.5 0 0 1-.83 1.342l-.894.447A.5.5 0 0 0 2 7.118V13h4v-1.293l-.854-.853A.5.5 0 0 1 5 10.5v-1A1.5 1.5 0 0 1 6.5 8h3A1.5 1.5 0 0 1 11 9.5v1a.5.5 0 0 1-.146.354l-.854.853V13h4V7.118a.5.5 0 0 0-.276-.447l-.895-.447A1.5 1.5 0 0 1 12 4.882V4h-2v1.5a.5.5 0 0 1-.5.5h-3a.5.5 0 0 1-.5-.5zm4-1h2v-.5a.5.5 0 0 0-.5-.5h-1a.5.5 0 0 0-.5.5zm4 11h-4v.5a.5.5 0 0 0 .5.5h3a.5.5 0 0 0 .5-.5zm-8 0H2v.5a.5.5 0 0 0 .5.5h3a.5.5 0 0 0 .5-.5z"/></svg>
<svg class="a" style="left:51px;top:42.5px" width="24.5" height="24.5" viewBox="0 0 16 16" fill="#111"><path fill-rule="evenodd" d="M1 8a7 7 0 1 0 14 0A7 7 0 0 0 1 8m15 0A8 8 0 1 1 0 8a8 8 0 0 1 16 0M4.5 7.5a.5.5 0 0 0 0 1h5.793l-2.147 2.146a.5.5 0 0 0 .708.708l3-3a.5.5 0 0 0 0-.708l-3-3a.5.5 0 1 0-.708.708L10.293 7.5z"/></svg>
<svg class="a" style="left:87px;top:42.5px" width="24.5" height="24.5" viewBox="0 0 16 16" fill="#111"><path d="M1.5 1a.5.5 0 0 0-.5.5v4a.5.5 0 0 1-1 0v-4A1.5 1.5 0 0 1 1.5 0h4a.5.5 0 0 1 0 1zM10 .5a.5.5 0 0 1 .5-.5h4A1.5 1.5 0 0 1 16 1.5v4a.5.5 0 0 1-1 0v-4a.5.5 0 0 0-.5-.5h-4a.5.5 0 0 1-.5-.5M.5 10a.5.5 0 0 1 .5.5v4a.5.5 0 0 0 .5.5h4a.5.5 0 0 1 0 1h-4A1.5 1.5 0 0 1 0 14.5v-4a.5.5 0 0 1 .5-.5m15 0a.5.5 0 0 1 .5.5v4a1.5 1.5 0 0 1-1.5 1.5h-4a.5.5 0 0 1 0-1h4a.5.5 0 0 0 .5-.5v-4a.5.5 0 0 1 .5-.5"/></svg>
<div class="a" style="left:119px;top:46px;width:2px;height:17.5px;background:#b8b8b0"></div>
<svg class="a" style="left:130px;top:45px" width="20" height="20" viewBox="0 0 20 20"><path d="M7.5,9.5 C8,4.5 16.5,4 15.7,10 C15.3,12.5 13.5,14.5 10.5,15.8" fill="none" stroke="#3b74dc" stroke-width="2.8" stroke-linecap="round"/><path d="M2.6,3.4 L2.6,10.7 L10,10.7 Z" fill="#3068d8"/></svg>
<svg class="a" style="left:168px;top:45px" width="20" height="20" viewBox="0 0 20 20"><path d="M12.5,9.5 C12,4.5 3.5,4 4.3,10 C4.7,12.5 6.5,14.5 9.5,15.8" fill="none" stroke="#c4d2e2" stroke-width="2.8" stroke-linecap="round"/><path d="M17.4,3.4 L17.4,10.7 L10,10.7 Z" fill="#bccbdc"/></svg>
<div class="a" style="left:197px;top:46px;width:2px;height:17.5px;background:#b8b8b0"></div>
<div class="a" style="left:201px;top:42.5px;width:72px;height:24px;background:#f0f0f0;border:1px solid #555"></div>
<div class="a" style="left:207px;top:46px;font-size:15px;color:#111;white-space:nowrap">11 pt</div>
<svg class="a" style="left:258px;top:51px" width="12" height="8" viewBox="0 0 12 8"><path d="M1.3,1.5 L6,6 L10.7,1.5" fill="none" stroke="#111" stroke-width="2"/></svg>
<div class="a" style="left:276px;top:46px;width:2px;height:17.5px;background:#b8b8b0"></div>

<div class="a" style="left:1px;top:74px;width:288px;height:29px;background:#cdc8a6"></div>
<div class="a" style="left:1px;top:76px;width:99px;height:25px;background:#0e5d7e"></div>
<div class="a" style="left:5px;top:80px;font-size:14px;font-weight:bold;color:#fff;white-space:nowrap;letter-spacing:1.3px">*Главная</div>
<div class="a" style="left:80px;top:82px;width:15px;height:13px;background:#2b6f8e"></div>
<svg class="a" style="left:80px;top:82px" width="15" height="13" viewBox="0 0 15 13"><path d="M4,2.5 L11,10.5 M11,2.5 L4,10.5" stroke="#0a4560" stroke-width="1.1"/></svg>
<div class="a" style="left:100px;top:76px;width:103px;height:27px;background:#ece9d8;border:1px solid #9a9a8a;border-bottom:2px solid #8098b0"></div>
<div class="a" style="left:105px;top:80px;font-size:14px;font-weight:bold;color:#111;white-space:nowrap;letter-spacing:1.2px">*Консоль</div>
<div class="a" style="left:181px;top:82px;width:16px;height:13px;background:#e2dfd2;border:1px solid #cfccc0"></div>
<svg class="a" style="left:181px;top:82px" width="16" height="13" viewBox="0 0 16 13"><path d="M4.5,2.5 L11.5,10.5 M11.5,2.5 L4.5,10.5" stroke="#b5b2a8" stroke-width="1.1"/></svg>
<div class="a" style="left:1px;top:103px;width:288px;height:2px;background:#8ea3b8"></div>
<div class="a" style="left:46px;top:343px;width:288px;height:17px;background:#e1eff7"></div>
<div class="a" style="left:44px;top:105px;width:1px;height:324px;background:#000"></div>
<div class="ln" style="top:107px">1</div><div class="cl" style="top:107px"><span style="color:#111">; Программа </span><span style="color:#d0101a">:</span><span style="color:#111"> Привет Мир</span><span style="color:#d010d0">!</span></div><div class="ln" style="top:124px">2</div><div class="cl" style="top:124px"><span style="color:#2828d0">(</span><span style="color:#5aa02c">progn</span></div><div class="ln" style="top:141px">3</div><div class="cl" style="top:141px">  <span style="color:#2828d0">(</span><span style="color:#111">oled</span><span style="color:#c030c0">-</span><span style="color:#111">setup </span><span style="color:#d0101a">0 128 64 -</span><span style="color:#111">1</span><span style="color:#2828d0">)</span></div><div class="ln" style="top:158px">4</div><div class="cl" style="top:158px">  <span style="color:#2828d0">(</span><span style="color:#3a9ac0">set</span><span style="color:#c030c0">-</span><span style="color:#111">cursor </span><span style="color:#d0101a">0 0</span><span style="color:#2828d0">)</span></div><div class="ln" style="top:175px">5</div><div class="cl" style="top:175px">  <span style="color:#2828d0">(</span><span style="color:#111">display</span><span style="color:#c030c0">-</span><span style="color:#1c1cb0">print </span><span style="color:#4060d0">"Привет!"</span><span style="color:#2828d0">)</span></div><div class="ln" style="top:192px">6</div><div class="cl" style="top:192px">  <span style="color:#2828d0">(</span><span style="color:#3a9ac0">set</span><span style="color:#c030c0">-</span><span style="color:#111">cursor </span><span style="color:#d0101a">0 10</span><span style="color:#2828d0">)</span></div><div class="ln" style="top:209px">7</div><div class="cl" style="top:209px">  <span style="color:#2828d0">(</span><span style="color:#3a9ac0">set</span><span style="color:#c030c0">-</span><span style="color:#111">text</span><span style="color:#c030c0">-</span><span style="color:#111">size </span><span style="color:#d0101a">2</span><span style="color:#2828d0">)</span></div><div class="ln" style="top:226px">8</div><div class="cl" style="top:226px">  <span style="color:#2828d0">(</span><span style="color:#111">display</span><span style="color:#c030c0">-</span><span style="color:#1c1cb0">print </span><span style="color:#4060d0">"Привет!"</span><span style="color:#2828d0">)</span></div><div class="ln" style="top:243px">9</div><div class="cl" style="top:243px">  <span style="color:#2828d0">(</span><span style="color:#3a9ac0">set</span><span style="color:#c030c0">-</span><span style="color:#111">cursor </span><span style="color:#d0101a">0 30</span><span style="color:#2828d0">)</span></div><div class="ln" style="top:260px">10</div><div class="cl" style="top:260px">  <span style="color:#2828d0">(</span><span style="color:#3a9ac0">set</span><span style="color:#c030c0">-</span><span style="color:#111">text</span><span style="color:#c030c0">-</span><span style="color:#111">size </span><span style="color:#d0101a">3</span><span style="color:#2828d0">)</span></div><div class="ln" style="top:277px">11</div><div class="cl" style="top:277px">  <span style="color:#2828d0">(</span><span style="color:#111">display</span><span style="color:#c030c0">-</span><span style="color:#1c1cb0">print </span><span style="color:#4060d0">"Привет!"</span><span style="color:#2828d0">)</span></div><div class="ln" style="top:294px">12</div><div class="cl" style="top:294px">  <span style="color:#2828d0">(</span><span style="color:#111">display</span><span style="color:#c030c0">-</span><span style="color:#111">show</span><span style="color:#2828d0">)</span></div><div class="ln" style="top:311px">13</div><div class="cl" style="top:311px"><span style="color:#2828d0">(</span><span style="color:#5aa02c">loop</span></div><div class="ln" style="top:328px">14</div><div class="cl" style="top:328px"><span style="color:#2828d0">))</span></div><div class="ln" style="top:345px">15</div><div class="cl" style="top:345px"></div><div class="ln" style="top:362px">16</div><div class="cl" style="top:362px"></div><div class="ln" style="top:379px">17</div><div class="cl" style="top:379px"></div><div class="ln" style="top:396px">18</div><div class="cl" style="top:396px"></div><div class="ln" style="top:413px">19</div><div class="cl" style="top:413px"></div>
</div>
<div id="vs" class="a"></div>
<div class="a" style="left:1021px;top:34px;width:0;height:0;border-left:3.7px solid transparent;border-right:3.7px solid transparent;border-bottom:4px solid #9a9a9a"></div>
<div class="a" style="left:1019px;top:43px;width:11px;height:441px;background:#c0c0c0"></div>
<div class="a" style="left:1021px;top:603px;width:0;height:0;border-left:3.7px solid transparent;border-right:3.7px solid transparent;border-top:4px solid #444"></div>
<div id="hs" class="a"></div>
<div class="a" style="left:9px;top:617px;width:0;height:0;border-top:3.6px solid transparent;border-bottom:3.6px solid transparent;border-right:4.3px solid #888"></div>
<div class="a" style="left:19px;top:615px;width:885px;height:11px;background:#c0c0c0"></div>
<div class="a" style="left:1008px;top:617px;width:0;height:0;border-top:3.6px solid transparent;border-bottom:3.6px solid transparent;border-left:4.3px solid #444"></div>
<div class="a" style="left:1017px;top:613px;width:15px;height:15px;background:#dcdcdc"></div>
<div class="a" style="left:0;top:0;width:1036px;height:1px;background:#f0f0f3"></div>
<div class="a" style="left:0;top:0;width:1px;height:1px;background:#000"></div><div class="a" style="left:1px;top:0;width:1px;height:1px;background:#fff"></div><div class="a" style="left:0;top:1px;width:1px;height:1px;background:#fff"></div>
<div class="a" style="left:1035px;top:0;width:1px;height:1px;background:#000"></div><div class="a" style="left:1034px;top:0;width:1px;height:1px;background:#fff"></div><div class="a" style="left:1035px;top:1px;width:1px;height:1px;background:#fff"></div>
</body></html>
